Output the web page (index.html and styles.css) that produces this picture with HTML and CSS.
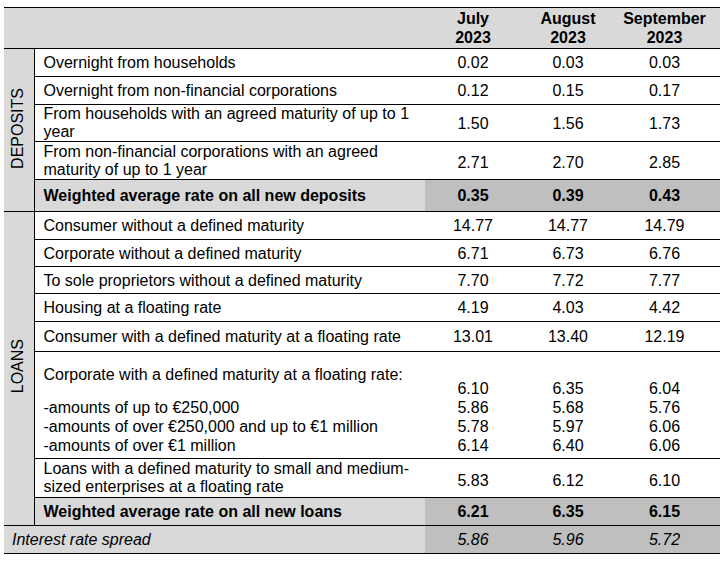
FILE: index.html
```
<!DOCTYPE html>
<html lang="en">
<head>
<meta charset="utf-8">
<title>Interest rates on new business</title>
<link rel="stylesheet" href="styles.css">
</head>
<body>
<table class="rates">
  <colgroup>
    <col class="c-sec">
    <col class="c-label">
    <col class="c-num1">
    <col class="c-num2">
    <col class="c-num3">
  </colgroup>
  <thead>
    <tr class="head">
      <th colspan="2"></th>
      <th>July<br>2023</th>
      <th>August<br>2023</th>
      <th>September<br>2023</th>
    </tr>
  </thead>
  <tbody>
    <tr class="h28">
      <td class="sec" rowspan="5"><span class="vert">DEPOSITS</span></td>
      <td class="label">Overnight from households</td>
      <td class="num">0.02</td><td class="num">0.03</td><td class="num">0.03</td>
    </tr>
    <tr class="h28">
      <td class="label">Overnight from non-financial corporations</td>
      <td class="num">0.12</td><td class="num">0.15</td><td class="num">0.17</td>
    </tr>
    <tr class="h36">
      <td class="label two">From households with an agreed maturity of up to 1 year</td>
      <td class="num">1.50</td><td class="num">1.56</td><td class="num">1.73</td>
    </tr>
    <tr class="h38">
      <td class="label two">From non-financial corporations with an agreed maturity of up to 1 year</td>
      <td class="num low">2.71</td><td class="num low">2.70</td><td class="num low">2.85</td>
    </tr>
    <tr class="h32 total">
      <td class="label">Weighted average rate on all new deposits</td>
      <td class="num">0.35</td><td class="num">0.39</td><td class="num">0.43</td>
    </tr>
    <tr class="h28">
      <td class="sec" rowspan="8"><span class="vert">LOANS</span></td>
      <td class="label">Consumer without a defined maturity</td>
      <td class="num">14.77</td><td class="num">14.77</td><td class="num">14.79</td>
    </tr>
    <tr class="h27">
      <td class="label">Corporate without a defined maturity</td>
      <td class="num">6.71</td><td class="num">6.73</td><td class="num">6.76</td>
    </tr>
    <tr class="h27">
      <td class="label">To sole proprietors without a defined maturity</td>
      <td class="num">7.70</td><td class="num">7.72</td><td class="num">7.77</td>
    </tr>
    <tr class="h28">
      <td class="label">Housing at a floating rate</td>
      <td class="num">4.19</td><td class="num">4.03</td><td class="num">4.42</td>
    </tr>
    <tr class="h30">
      <td class="label">Consumer with a defined maturity at a floating rate</td>
      <td class="num">13.01</td><td class="num">13.40</td><td class="num">12.19</td>
    </tr>
    <tr class="h107">
      <td class="label block">
        <p class="lead">Corporate with a defined maturity at a floating rate:</p>
        <p class="sub">-amounts of up to €250,000</p>
        <p class="sub">-amounts of over €250,000 and up to €1 million</p>
        <p class="sub">-amounts of over €1 million</p>
      </td>
      <td class="num stack"><p>6.10</p><p>5.86</p><p>5.78</p><p>6.14</p></td>
      <td class="num stack"><p>6.35</p><p>5.68</p><p>5.97</p><p>6.40</p></td>
      <td class="num stack"><p>6.04</p><p>5.76</p><p>6.06</p><p>6.06</p></td>
    </tr>
    <tr class="h39">
      <td class="label two">Loans with a defined maturity to small and medium-sized enterprises at a floating rate</td>
      <td class="num low">5.83</td><td class="num low">6.12</td><td class="num low">6.10</td>
    </tr>
    <tr class="h28 total">
      <td class="label">Weighted average rate on all new loans</td>
      <td class="num">6.21</td><td class="num">6.35</td><td class="num">6.15</td>
    </tr>
    <tr class="h28 spread">
      <td class="label" colspan="2">Interest rate spread</td>
      <td class="num">5.86</td><td class="num">5.96</td><td class="num">5.72</td>
    </tr>
  </tbody>
</table>
</body>
</html>
```

FILE: styles.css
```
html, body {
  margin: 0;
  padding: 0;
  background: #ffffff;
}

body {
  padding: 7px 0 0 4px;
  font-family: "Liberation Sans", Arial, sans-serif;
  font-size: 16px;
  color: #000;
}

th, td {
  padding: 0;
  line-height: 19px;
}

.rates {
  border-collapse: collapse;
  table-layout: fixed;
  width: 716px;
  border-top: 1px solid #000;
  border-bottom: 1px solid #000;
}

.c-sec { width: 30px; }
.c-label { width: 391px; }
.c-num1 { width: 96px; }
.c-num2 { width: 94px; }
.c-num3 { width: 105px; }

.head {
  height: 41px;
  background: #d9d9d9;
}

.head th {
  font-weight: bold;
  text-align: center;
  vertical-align: bottom;
  padding-bottom: 1px;
  border-bottom: 1px solid #000;
}

.head th:last-child {
  padding-right: 6px;
}

.h27 { height: 27px; }
.h28 { height: 28px; }
.h30 { height: 30px; }
.h32 { height: 32px; }
.h36 { height: 36px; }
.h38 { height: 38px; }
.h39 { height: 39px; }
.h107 { height: 107px; }

.sec {
  background: #d9d9d9;
  border-right: 1px solid #000;
  border-bottom: 1px solid #000;
  text-align: center;
  vertical-align: middle;
}

.vert {
  display: inline-block;
  writing-mode: vertical-rl;
  transform: rotate(180deg);
  line-height: 19px;
  padding-left: 2px;
}

.label {
  padding-left: 9px;
  padding-right: 6px;
  vertical-align: middle;
  border-bottom: 1px solid #000;
}

.label.two {
  line-height: 18px;
}

.num {
  text-align: center;
  vertical-align: middle;
  border-bottom: 1px solid #000;
}

.num:last-child {
  padding-right: 6px;
}

.num.low {
  padding-top: 4px;
}

.total .label {
  background: #d9d9d9;
  font-weight: bold;
}

.total .num {
  background: #bfbfbf;
  font-weight: bold;
}

.spread .label {
  background: #d9d9d9;
  font-style: italic;
  padding-left: 8px;
}

.spread .num {
  background: #bfbfbf;
  font-style: italic;
}

.label.block {
  vertical-align: top;
  padding-top: 13px;
  padding-bottom: 3px;
}

.block p,
.stack p {
  margin: 0;
  line-height: 19px;
}

.block .lead {
  margin-bottom: 14px;
}

.num.stack {
  vertical-align: bottom;
  padding-bottom: 3px;
}
```
